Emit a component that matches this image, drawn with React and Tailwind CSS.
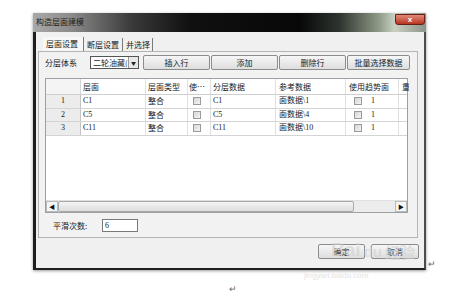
import React from "react";

const cols = "grid grid-cols-[35px_65px_42px_23px_65px_70px_53px_10px]";

const rows = [
    { n: "1", layer: "C1", ref: "面数据\\1" },
    { n: "2", layer: "C5", ref: "面数据\\4" },
    { n: "3", layer: "C11", ref: "面数据\\10" },
];

const Check = () => (
    <span className="inline-block w-[8px] h-[8px] border border-[#9a9a9a] bg-gradient-to-br from-[#d6d6d6] to-[#f4f4f4]" />
);

const Btn = ({ children, className = "" }) => (
    <div
        className={`flex items-center justify-center h-[15px] border border-[#8c8c8c] rounded-[2px] bg-gradient-to-b from-[#f6f6f6] to-[#dedede] text-[8px] leading-none text-[#222] ${className}`}
    >
        {children}
    </div>
);

const Grid = () => {
    return (
        <div className="w-[363px] h-[135px] mt-[8px] ml-[6px] border border-[#9aa0a6] bg-white flex flex-col">
            {/* header */}
            <div className={`${cols} h-[16px] border-b border-[#cfcfcf] text-[8px] leading-none text-[#222]`}>
                <div className="bg-[#f4f4f4] border-r border-[#d4d4d4]" />
                <div className="flex items-center pl-[2px] border-r border-[#e0e0e0]">层面</div>
                <div className="flex items-center pl-[2px] border-r border-[#e0e0e0]">层面类型</div>
                <div className="flex items-center pl-[1px] border-r border-[#e0e0e0] whitespace-nowrap">使…</div>
                <div className="flex items-center pl-[2px] border-r border-[#e0e0e0]">分层数据</div>
                <div className="flex items-center pl-[3px] border-r border-[#e0e0e0]">参考数据</div>
                <div className="flex items-center pl-[3px] border-r border-[#e0e0e0] whitespace-nowrap">使用趋势面</div>
                <div className="flex items-center pl-[3px] overflow-hidden">重</div>
            </div>
            {rows.map((r) => (
                <div
                    key={r.n}
                    className={`${cols} h-[13.5px] border-b border-[#d4d4d4] text-[8px] leading-none text-[#222]`}
                >
                    <div className="flex items-center justify-center bg-[#ececec] border-r border-[#c4c4c4] font-['Liberation_Serif',serif]">
                        {r.n}
                    </div>
                    <div className="flex items-center pl-[2px] border-r border-[#e0e0e0] font-['Liberation_Serif','Noto_Sans_CJK_SC',serif]">
                        {r.layer}
                    </div>
                    <div className="flex items-center pl-[2px] border-r border-[#e0e0e0]">整合</div>
                    <div className="flex items-center pl-[5px] border-r border-[#e0e0e0]">
                        <Check />
                    </div>
                    <div className="flex items-center pl-[2px] border-r border-[#e0e0e0] font-['Liberation_Serif','Noto_Sans_CJK_SC',serif]">
                        {r.layer}
                    </div>
                    <div className="flex items-center pl-[3px] border-r border-[#e0e0e0] font-['Liberation_Serif','Noto_Sans_CJK_SC',serif] whitespace-nowrap">
                        {r.ref}
                    </div>
                    <div className="flex items-center pl-[8px] gap-[9px] border-r border-[#e0e0e0] font-['Liberation_Serif',serif]">
                        <Check />
                        <span>1</span>
                    </div>
                    <div />
                </div>
            ))}
            <div className="flex-1" />
            {/* horizontal scrollbar */}
            <div className="h-[12px] flex bg-[#ececec] border-t border-[#e0e0e0]">
                <div className="w-[12px] flex items-center justify-center border border-[#b8b8b8] bg-[#f6f6f6] text-[6px] leading-none text-[#111]">
                    ◀
                </div>
                <div className="w-[296px] border border-[#a8a8a8] rounded-[2px] bg-gradient-to-b from-[#f4f4f4] to-[#dcdcdc]" />
                <div className="flex-1" />
                <div className="w-[12px] flex items-center justify-center border border-[#b8b8b8] bg-[#f6f6f6] text-[6px] leading-none text-[#111]">
                    ▶
                </div>
            </div>
        </div>
    );
};

const Window = () => {
    return (
        <div className="w-[393px] h-[257px] flex flex-col shadow-[0_1px_3px_rgba(0,0,0,0.4)]">
            {/* title bar */}
            <div className="h-[19px] flex items-start justify-between bg-[linear-gradient(90deg,#a9a9a9_0%,#8a8a8a_10%,#3a3a3a_25%,#101010_40%,#080808_68%,#2e3430_78%,#8e9a86_88%,#c9d0c2_92%,#8a9488_100%)]">
                <div className="pl-[3px] pt-[5px] text-[8px] leading-none text-[#1c1c1c]">构造层面建模</div>
                <div className="mt-[1px] mr-[1px] w-[30px] h-[11px] rounded-b-[3px] border border-[#6a2018] bg-gradient-to-b from-[#e08a78] to-[#b8321e] flex items-center justify-center text-white text-[8px] font-bold leading-none font-['Liberation_Sans',sans-serif]">
                    x
                </div>
            </div>
            {/* body */}
            <div className="flex-1 flex flex-col bg-[#f0f0f0] border-l-[3px] border-l-[#1e1e1e] border-r-[2px] border-r-[#4a4e52] border-b-[2px] border-b-[#1e1e1e]">
                {/* tabs */}
                <div className="flex items-end h-[14px] mt-[5px] ml-[7px] text-[8px] leading-none text-[#222]">
                    <div className="w-[41px] h-[14px] pl-[3px] flex items-center border-r border-[#7a7a7a] bg-[#f7f7f7]">层面设置</div>
                    <div className="w-[39px] h-[13px] pl-[3px] flex items-center border-r border-[#7a7a7a]">断层设置</div>
                    <div className="w-[30px] h-[13px] pl-[3px] flex items-center border-r border-[#7a7a7a]">井选择</div>
                </div>
                {/* tab panel */}
                <div className="ml-[2px] w-[380px] h-[187px] border border-[#b4b4b4] bg-[#f2f2f2] flex flex-col">
                    <div className="flex items-center mt-[3px] ml-[6px] h-[15px] text-[8px] leading-none text-[#222]">
                        <span className="w-[45px]">分层体系</span>
                        <div className="w-[49px] h-[13px] flex items-center border border-[#555] bg-white">
                            <span className="flex-1 pl-[2px] overflow-hidden whitespace-nowrap">二轮油藏(</span>
                            <span className="w-[10px] h-[11px] flex items-center justify-center border-l border-[#999] bg-[#e8e8e8] text-[5px]">▼</span>
                        </div>
                        <Btn className="w-[67px] ml-[4px]">插入行</Btn>
                        <Btn className="w-[67px] ml-[1px]">添加</Btn>
                        <Btn className="w-[67px] ml-[1px]">删除行</Btn>
                        <Btn className="w-[63px] ml-[1px]">批量选择数据</Btn>
                    </div>
                    <Grid />
                    <div className="flex items-center mt-[6px] ml-[14px] text-[8px] leading-none text-[#222]">
                        <span className="w-[49px]">平滑次数:</span>
                        <div className="w-[36px] h-[13px] flex items-center pl-[2px] border border-[#7a7a7a] bg-white font-['Liberation_Serif',serif]">
                            6
                        </div>
                    </div>
                </div>
                {/* dialog buttons */}
                <div className="relative flex justify-end gap-[6px] mt-[6px] mr-[5px]">
                    <Btn className="w-[47px] h-[14px]">确定</Btn>
                    <Btn className="w-[48px] h-[14px]">取消</Btn>
                    <div className="absolute right-[4px] top-[-4px] flex items-end gap-[3px] text-[#d0d0d0]/60 pointer-events-none font-['Liberation_Sans',sans-serif] font-bold leading-none">
                        <span className="text-[19px]">Bai</span>
                        <span className="text-[15px]">du</span>
                        <span className="text-[15px] font-['Noto_Sans_CJK_SC',sans-serif]">经验</span>
                    </div>
                </div>
            </div>
        </div>
    );
};

export default function App() {
    return (
        <div className="w-[449px] h-[293px] bg-white overflow-hidden font-['Noto_Sans_CJK_SC',sans-serif]">
            <div className="flex items-end pt-[13px] pl-[33px]">
                <Window />
                <span className="ml-[2px] mb-[2px] text-[9px] leading-none text-[#666]">↵</span>
            </div>
            <div className="pl-[304px] mt-[2px] text-[8px] leading-none text-[#e4e4e4] font-['Liberation_Sans',sans-serif]">
                jingyan.baidu.com
            </div>
            <div className="pl-[229px] mt-[4px] text-[9px] leading-none text-[#666]">↵</div>
        </div>
    );
}
